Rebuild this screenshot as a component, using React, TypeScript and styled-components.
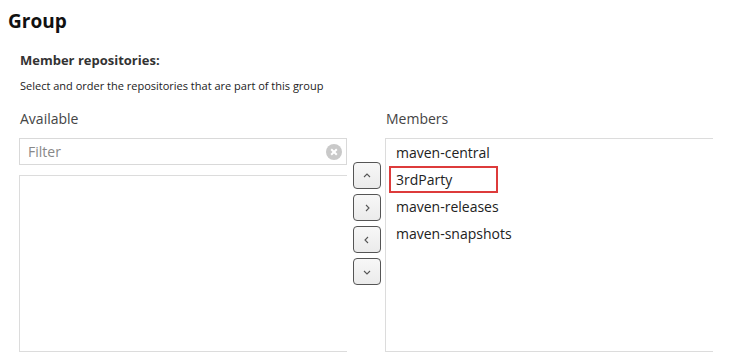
import React from 'react'
import styled, { createGlobalStyle } from 'styled-components'

const GlobalStyle = createGlobalStyle`
  body {
    margin: 0;
    background: #fff;
    font-family: "Open Sans", "Liberation Sans", sans-serif;
    color: #333;
  }
`

const Page = styled.div`
  padding: 8px 0 0 8px;
  width: 745px;
  height: 363px;
  box-sizing: border-box;
  overflow: hidden;
`

const Title = styled.h1`
  margin: 0;
  font-size: 19px;
  font-weight: 700;
  color: #111;
  line-height: 26px;
`

const Section = styled.div`
  padding: 18px 0 0 12px;
`

const SectionTitle = styled.div`
  font-size: 13px;
  font-weight: 700;
  color: #333;
  line-height: 16px;
`

const Help = styled.div`
  margin-top: 11px;
  font-size: 11px;
  color: #222;
  line-height: 14px;
`

const Picker = styled.div`
  display: flex;
  margin-top: 17px;
  margin-left: -1px;
`

const Column = styled.div`
  display: flex;
  flex-direction: column;
  width: 328px;
`

const ColumnLabel = styled.div`
  font-size: 14px;
  color: #444;
  line-height: 18px;
  height: 18px;
  padding-left: 1px;
  margin-bottom: 10px;
`

const FilterBox = styled.div`
  position: relative;
  height: 27px;
  border: 1px solid #d9d9d9;
  box-sizing: border-box;
  display: flex;
  align-items: center;
  padding-left: 8px;
  font-size: 14px;
  color: #888;
`

const ClearIcon = styled.svg`
  position: absolute;
  right: 4px;
  top: 5px;
`

const List = styled.div<{ $height: number; $top: number }>`
  margin-top: ${(p) => p.$top}px;
  height: ${(p) => p.$height}px;
  border: 1px solid #dcdcdc;
  border-right: none;
  box-sizing: border-box;
`

const Item = styled.div<{ $marked?: boolean }>`
  height: 27px;
  line-height: 24px;
  box-sizing: border-box;
  margin-left: 3px;
  padding-left: 5px;
  border: 2px solid ${(p) => (p.$marked ? '#dd3b3b' : 'transparent')};
  width: ${(p) => (p.$marked ? '109px' : 'auto')};
  font-size: 14px;
  color: #222;
`

const Buttons = styled.div`
  display: flex;
  flex-direction: column;
  gap: 5px;
  width: 28px;
  margin: 52px 4px 0 6px;
`

const MoveButton = styled.div`
  width: 28px;
  height: 27px;
  box-sizing: border-box;
  border: 1px solid #555;
  border-radius: 4px;
  background: linear-gradient(#f7f7f7, #ebebeb);
  display: flex;
  align-items: center;
  justify-content: center;
`

const Chevron = ({ dir }: { dir: 'up' | 'down' | 'left' | 'right' }) => {
  const d = {
    up: 'M2 6 L5 3 L8 6',
    down: 'M2 4 L5 7 L8 4',
    right: 'M4 2 L7 5 L4 8',
    left: 'M6 2 L3 5 L6 8',
  }[dir]
  return (
    <svg width="10" height="10" viewBox="0 0 10 10">
      <path d={d} fill="none" stroke="#555" strokeWidth="1.1" />
    </svg>
  )
}

const members = ['maven-central', '3rdParty', 'maven-releases', 'maven-snapshots']

const App: React.FC = () => (
  <Page>
    <GlobalStyle />
    <Title>Group</Title>
    <Section>
      <SectionTitle>Member repositories:</SectionTitle>
      <Help>Select and order the repositories that are part of this group</Help>
      <Picker>
        <Column>
          <ColumnLabel>Available</ColumnLabel>
          <FilterBox>
            Filter
            <ClearIcon width="16" height="16" viewBox="0 0 16 16">
              <circle cx="8" cy="8" r="8" fill="#c9c9c9" />
              <path d="M5.2 5.2 L10.8 10.8 M10.8 5.2 L5.2 10.8" stroke="#fff" strokeWidth="2" />
            </ClearIcon>
          </FilterBox>
          <List $top={10} $height={177} />
        </Column>
        <Buttons>
          <MoveButton><Chevron dir="up" /></MoveButton>
          <MoveButton><Chevron dir="right" /></MoveButton>
          <MoveButton><Chevron dir="left" /></MoveButton>
          <MoveButton><Chevron dir="down" /></MoveButton>
        </Buttons>
        <Column>
          <ColumnLabel>Members</ColumnLabel>
          <List $top={0} $height={214}>
            {members.map((m) => (
              <Item key={m} $marked={m === '3rdParty'}>{m}</Item>
            ))}
          </List>
        </Column>
      </Picker>
    </Section>
  </Page>
)

export default App
